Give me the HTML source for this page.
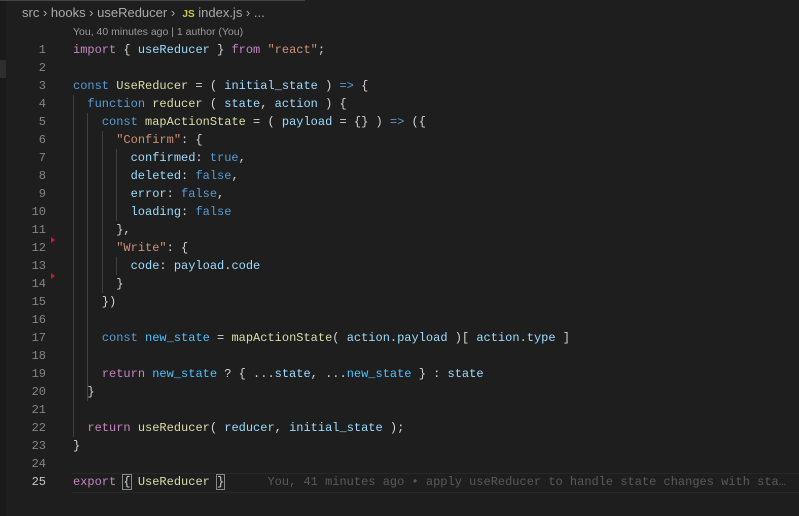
<!DOCTYPE html><html><head><style>
body{margin:0;width:799px;height:516px;background:#1e1e1e;overflow:hidden;position:relative;font-family:"Liberation Mono",monospace;}
.bc{position:absolute;top:5px;left:22px;font:13px "Liberation Sans",sans-serif;color:#a9a9a9;white-space:pre}
.bc .js{color:#cbcb41;font-size:10px;font-weight:bold}
.blame{position:absolute;top:26px;left:73px;font:10.5px "Liberation Sans",sans-serif;color:#9a9a9a}
.ln{position:absolute;left:0;width:46px;text-align:right;font-size:12px;color:#858585;line-height:18px}
.code{position:absolute;left:73px;top:41px;font-size:12px;line-height:18px;color:#d4d4d4;white-space:pre}
.k{color:#c586c0}.b{color:#569cd6}.f{color:#dcdcaa}.v{color:#9cdcfe}.s{color:#ce9178}.c{color:#4fc1ff}
.g{position:absolute;width:1px;background:#404040}
</style></head><body>
<div style="position:absolute;left:0;top:0;width:6px;height:516px;background:#1a1a1a"></div>
<div style="position:absolute;left:0;top:60px;width:6px;height:18px;background:#2e2e2e"></div>
<div style="position:absolute;left:0;top:0;width:305px;height:1px;background:#444"></div>
<div class="bc">src › hooks › useReducer ›  <span class="js">JS</span> index.js › ...</div>
<div class="blame">You, 40 minutes ago | 1 author (You)</div>
<div class="ln" style="top:41px">1<br>2<br>3<br>4<br>5<br>6<br>7<br>8<br>9<br>10<br>11<br>12<br>13<br>14<br>15<br>16<br>17<br>18<br>19<br>20<br>21<br>22<br>23<br>24<br><span style="color:#c6c6c6">25</span></div>
<div style="position:absolute;left:72px;top:473px;width:727px;height:18px;border-top:1px solid #282828;border-bottom:1px solid #282828"></div>
<div class="g" style="left:73px;top:95px;height:342px"></div>
<div class="g" style="left:87px;top:113px;height:288px"></div>
<div class="g" style="left:102px;top:131px;height:162px"></div>
<div class="g" style="left:116px;top:149px;height:72px"></div>
<div class="g" style="left:116px;top:257px;height:18px"></div>
<div style="position:absolute;left:51px;top:237px;border-left:4px solid #c0202a;border-top:3px solid transparent;border-bottom:3px solid transparent"></div>
<div style="position:absolute;left:51px;top:273px;border-left:4px solid #c0202a;border-top:3px solid transparent;border-bottom:3px solid transparent"></div>
<div class="code"><span class="k">import</span> { <span class="v">useReducer</span> } <span class="k">from</span> <span class="s">"react"</span>;

<span class="b">const</span> <span class="f">UseReducer</span> = ( <span class="v">initial_state</span> ) <span class="b">=&gt;</span> {
  <span class="b">function</span> <span class="f">reducer</span> ( <span class="v">state</span>, <span class="v">action</span> ) {
    <span class="b">const</span> <span class="f">mapActionState</span> = ( <span class="v">payload</span> = {} ) <span class="b">=&gt;</span> ({
      <span class="s">"Confirm"</span>: {
        <span class="v">confirmed</span>: <span class="b">true</span>,
        <span class="v">deleted</span>: <span class="b">false</span>,
        <span class="v">error</span>: <span class="b">false</span>,
        <span class="v">loading</span>: <span class="b">false</span>
      },
      <span class="s">"Write"</span>: {
        <span class="v">code</span>: <span class="v">payload</span>.<span class="v">code</span>
      }
    })

    <span class="b">const</span> <span class="c">new_state</span> = <span class="f">mapActionState</span>( <span class="v">action</span>.<span class="v">payload</span> )[ <span class="v">action</span>.<span class="v">type</span> ]

    <span class="k">return</span> <span class="c">new_state</span> ? { ...<span class="v">state</span>, ...<span class="c">new_state</span> } : <span class="v">state</span>
  }

  <span class="k">return</span> <span class="f">useReducer</span>( <span class="v">reducer</span>, <span class="v">initial_state</span> );
}

<span class="k">export</span> <span style="outline:1px solid #888">{</span> <span class="f">UseReducer</span> <span style="outline:1px solid #888">}</span>      <span style="color:#5a5a5a">You, 41 minutes ago • apply useReducer to handle state changes with sta…</span></div>
</body></html>
